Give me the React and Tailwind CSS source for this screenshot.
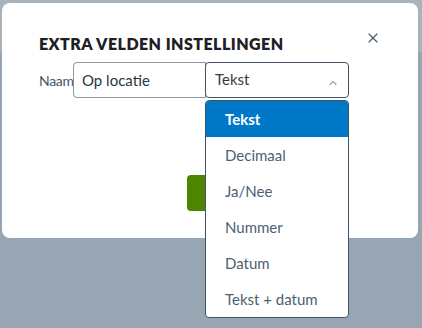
import { X, ChevronUp } from 'lucide-react';

const options = ['Tekst', 'Decimaal', 'Ja/Nee', 'Nummer', 'Datum', 'Tekst + datum'];

export default function App() {
  const selected = 'Tekst';

  return (
    <div className="relative h-[328px] w-[422px] overflow-hidden bg-[#98a6b3] font-['Lato',sans-serif]">
      <div className="h-[52px] bg-[#a9b3bc]" />
      <div className="absolute left-[2px] top-[3px] h-[235px] w-[416px] rounded-lg bg-white">
        <div className="flex items-start justify-between pl-[37px] pr-[37px] pt-[29px]">
          <h2 className="text-[16px] font-extrabold tracking-[0.45px] text-[#1d2125]">EXTRA VELDEN INSTELLINGEN</h2>
          <button className="-mt-[2px] text-[#4a5a6b]" aria-label="Sluiten">
            <X className="h-[16px] w-[16px]" strokeWidth={1.75} />
          </button>
        </div>

        <div className="mt-[6px] flex items-center pl-[37px]">
          <label className="w-[34px] text-[14px] tracking-[-0.3px] text-[#44566a]">Naam</label>
          <input
            className="h-[36px] w-[133px] rounded-l border border-[#8b97a3] px-[8px] text-[15px] text-[#2b3540] outline-none"
            defaultValue="Op locatie"
          />
          <div className="relative -ml-px">
            <div className="flex h-[36px] w-[144px] items-start justify-between rounded border border-[#3e5166] px-[9px] pt-[5px] text-[15px] text-[#3a3a3a]">
              <span>Tekst</span>
              <ChevronUp className="mt-[9px] h-[12px] w-[12px] text-[#9aa6b1]" strokeWidth={2.5} />
            </div>
            <ul className="absolute left-0 top-[38px] z-10 w-[144px] overflow-hidden rounded border border-[#3e5166] bg-white">
              {options.map((o) => (
                <li
                  key={o}
                  className={
                    o === selected
                      ? 'flex h-[36px] items-center bg-[#0078c8] pl-[19px] text-[15px] font-bold text-white'
                      : 'flex h-[36px] items-center pl-[19px] text-[15px] text-[#4d5f72]'
                  }
                >
                  {o}
                </li>
              ))}
            </ul>
          </div>
        </div>

        <div className="mt-[77px] flex pl-[185px]">
          <button className="h-[36px] w-[100px] rounded bg-[#4e8500]" />
        </div>
      </div>
    </div>
  );
}
